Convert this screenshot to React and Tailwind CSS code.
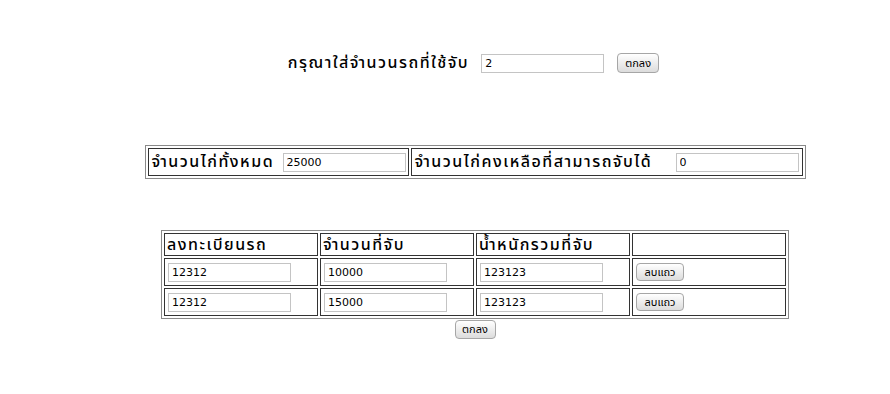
const thai = { fontFamily: '"Noto Sans Thai", "Noto Sans", "DejaVu Sans", sans-serif' };

function Btn({ children, className = '' }) {
  return (
    <button
      type="button"
      className={`block rounded-[4px] border border-[#a6a6a6] bg-gradient-to-b from-white to-[#dcdcdc] text-[11px] leading-none text-black ${className}`}
      style={thai}
    >
      {children}
    </button>
  );
}

function Field({ value, className = '' }) {
  return (
    <input
      readOnly
      value={value}
      className={`block h-[19px] w-[123px] border border-[#c4c4c4] bg-white px-[3px] text-[11px] text-black outline-none [font-family:'DejaVu_Sans',sans-serif] ${className}`}
    />
  );
}

export default function App() {
  const rows = [
    { plate: '12312', count: '10000', weight: '123123' },
    { plate: '12312', count: '15000', weight: '123123' },
  ];

  return (
    <div className="min-h-screen w-full overflow-hidden bg-white text-black">
      <div className="flex flex-col items-center pl-[60px]">
        <div className="mt-[53px] mr-[3px] flex h-[20px] items-center">
          <span className="text-[16px] font-medium leading-[20px] tracking-[1.5px]" style={thai}>กรุณาใส่จำนวนรถที่ใช้จับ</span>
          <Field value="2" className="ml-[12px]" />
          <Btn className="ml-[13px] h-[20px] w-[42px]">ตกลง</Btn>
        </div>

        <table className="mt-[72px] w-[661px] border-separate border-spacing-[2px] border border-[#8a8a8a]">
          <tbody>
            <tr>
              <td className="h-[28px] w-[261px] border border-[#333] p-[1px]">
                <div className="flex items-center justify-between">
                  <span className="pl-[2px] text-[16px] font-medium leading-[20px] tracking-[1.5px]" style={thai}>จำนวนไก่ทั้งหมด</span>
                  <Field value="25000" className="mr-[1px]" />
                </div>
              </td>
              <td className="h-[28px] border border-[#333] p-[1px]">
                <div className="flex items-center justify-between">
                  <span className="pl-[2px] text-[16px] font-medium leading-[20px] tracking-[1.5px]" style={thai}>จำนวนไก่คงเหลือที่สามารถจับได้</span>
                  <Field value="0" className="mr-[2px]" />
                </div>
              </td>
            </tr>
          </tbody>
        </table>

        <table className="mt-[51px] w-[628px] table-fixed border-separate border-spacing-[2px] border border-[#8a8a8a]">
          <tbody>
            <tr>
              <td className="h-[23px] border border-[#333] px-[2px] py-0 text-[16px] font-medium leading-[20px] tracking-[1.5px]" style={thai}>ลงทะเบียนรถ</td>
              <td className="h-[23px] border border-[#333] px-[2px] py-0 text-[16px] font-medium leading-[20px] tracking-[1.5px]" style={thai}>จำนวนที่จับ</td>
              <td className="h-[23px] border border-[#333] px-[2px] py-0 text-[16px] font-medium leading-[20px] tracking-[1.5px]" style={thai}>น้ำหนักรวมที่จับ</td>
              <td className="h-[23px] border border-[#333]"></td>
            </tr>
            {rows.map((r, i) => (
              <tr key={i}>
                <td className="h-[28px] border border-[#333] px-[3px] py-0"><Field value={r.plate} /></td>
                <td className="h-[28px] border border-[#333] px-[3px] py-0"><Field value={r.count} /></td>
                <td className="h-[28px] border border-[#333] px-[3px] py-0"><Field value={r.weight} /></td>
                <td className="h-[28px] border border-[#333] px-[3px] py-0">
                  <Btn className="h-[18px] w-[48px]">ลบแถว</Btn>
                </td>
              </tr>
            ))}
          </tbody>
        </table>

        <Btn className="mt-[1px] h-[19px] w-[41px]">ตกลง</Btn>
      </div>
    </div>
  );
}
